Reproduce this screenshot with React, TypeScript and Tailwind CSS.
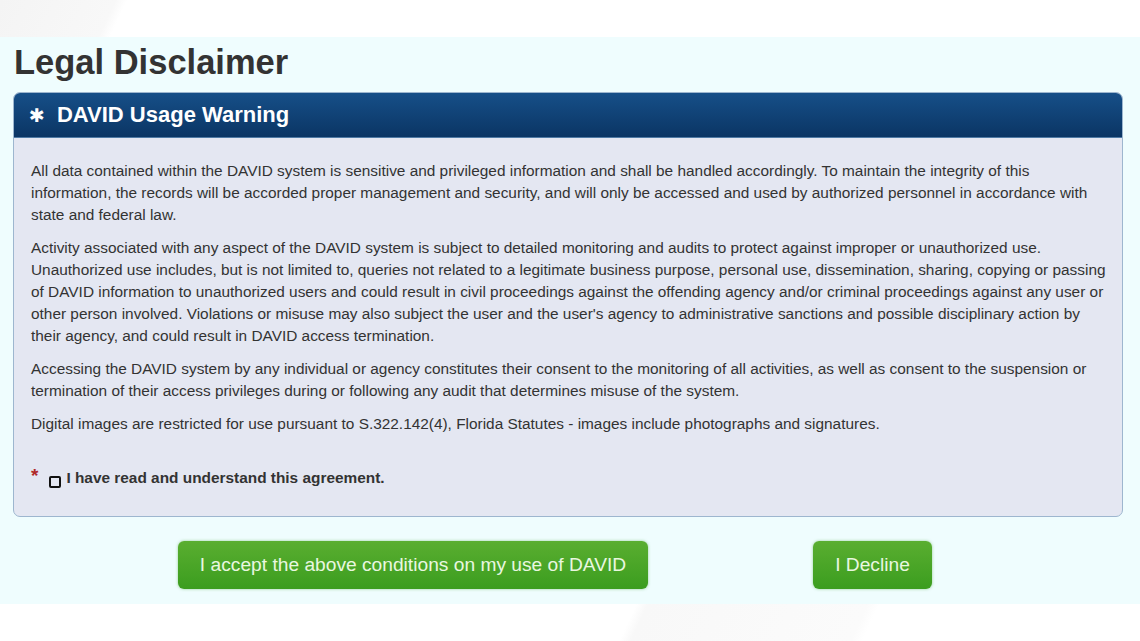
import React from "react";

export default function App() {
  const font = { fontFamily: '"Liberation Sans", Arial, sans-serif' };
  return (
    <div className="w-[1140px] h-[641px] overflow-hidden bg-white flex flex-col" style={font}>
      <div className="h-[37px] shrink-0 bg-[linear-gradient(115deg,#f4f4f4_0%,#f8f8f8_10%,#ffffff_11%,#ffffff_100%)]" />
      <div className="h-[567px] shrink-0 bg-[#effdfe] flex flex-col">
        <h1 className="text-[34.5px] leading-[40px] font-bold text-[#333333] pl-[14px] mt-[5px]">Legal Disclaimer</h1>
        <div className="mt-[10px] ml-[13px] w-[1110px] rounded-[7px] border border-[#9db6cf] bg-[#e4e7f2] overflow-hidden">
          <div className="h-[45px] bg-[linear-gradient(#164f88,#0b3564)] border-b border-[#4f7aa5] flex items-center pl-[15px]">
            <span className="text-white text-[19px] leading-none mr-[12px]" style={{ fontFamily: '"DejaVu Sans", sans-serif' }}>✱</span>
            <span className="text-white text-[22px] font-bold mt-[-1px]">DAVID Usage Warning</span>
          </div>
          <div className="pl-[17px] pr-[10px] pt-[22px] pb-[28px] text-[15.4px] leading-[22px] text-[#333333]">
            <p className="mb-[11px]">
              All data contained within the DAVID system is sensitive and privileged information and shall be handled accordingly. To maintain the integrity of this information, the records will be accorded proper management and security, and will only be accessed and used by authorized personnel in accordance with state and federal law.
            </p>
            <p className="mb-[11px]">
              Activity associated with any aspect of the DAVID system is subject to detailed monitoring and audits to protect against improper or unauthorized use. Unauthorized use includes, but is not limited to, queries not related to a legitimate business purpose, personal use, dissemination, sharing, copying or passing of DAVID information to unauthorized users and could result in civil proceedings against the offending agency and/or criminal proceedings against any user or other person involved. Violations or misuse may also subject the user and the user's agency to administrative sanctions and possible disciplinary action by their agency, and could result in DAVID access termination.
            </p>
            <p className="mb-[11px]">
              Accessing the DAVID system by any individual or agency constitutes their consent to the monitoring of all activities, as well as consent to the suspension or termination of their access privileges during or following any audit that determines misuse of the system.
            </p>
            <p>
              Digital images are restricted for use pursuant to S.322.142(4), Florida Statutes - images include photographs and signatures.
            </p>
            <div className="mt-[35px] flex items-start">
              <span className="text-[#b02a2a] font-bold text-[19px] leading-none mt-[-4px] mr-[11px]">*</span>
              <span className="w-[12px] h-[12px] border-2 border-[#111111] rounded-[2px] mt-[6px] mr-[5px] shrink-0" />
              <span className="font-bold text-[15.4px] leading-[16px] text-[#333333]">I have read and understand this agreement.</span>
            </div>
          </div>
        </div>
        <div className="mt-[24px] flex pl-[178px]">
          <button className="w-[470px] h-[48px] rounded-[6px] bg-[linear-gradient(#5aae30,#3b9d1f)] text-[#e9f7e0] text-[19.2px] shadow-[0_0_3px_rgba(60,160,40,0.5)]">
            I accept the above conditions on my use of DAVID
          </button>
          <button className="ml-[165px] w-[119px] h-[48px] rounded-[6px] bg-[linear-gradient(#5aae30,#3b9d1f)] text-[#e9f7e0] text-[19.2px] shadow-[0_0_3px_rgba(60,160,40,0.5)]">
            I Decline
          </button>
        </div>
      </div>
      <div className="flex-1 bg-[linear-gradient(115deg,#ffffff_0%,#ffffff_55%,#f8f8f8_56%,#fbfbfb_75%,#ffffff_76%)]" />
    </div>
  );
}
